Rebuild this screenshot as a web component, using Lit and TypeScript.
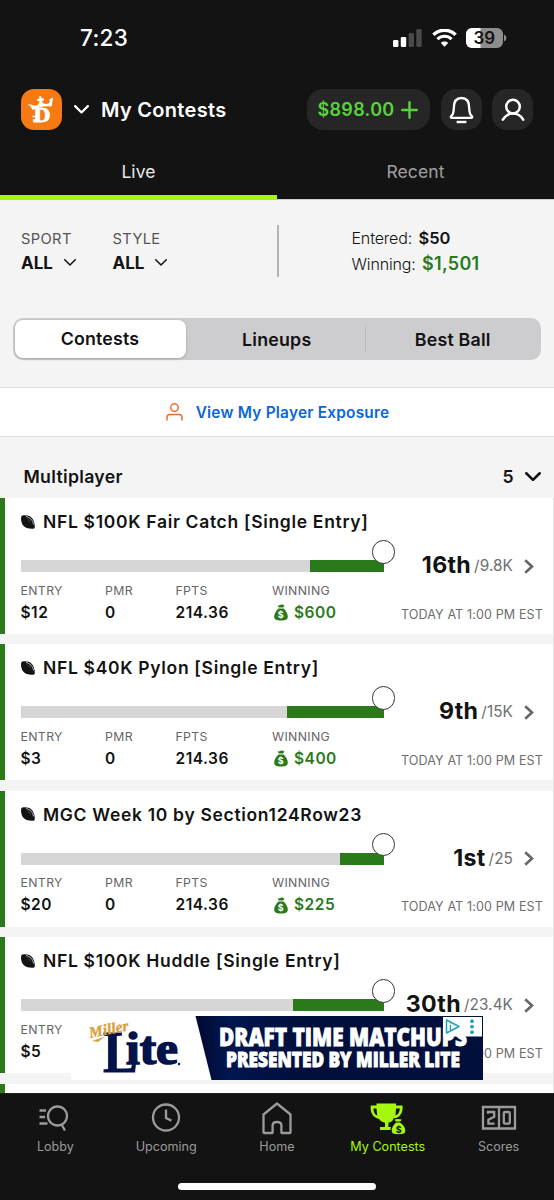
import { LitElement, html, css, svg } from "lit";
import { customElement, property } from "lit/decorators.js";

interface Contest {
  name: string;
  entry: string;
  pmr: string;
  fpts: string;
  winning: string;
  place: string;
  field: string;
  progress: number;
}

const CONTESTS: Contest[] = [
  { name: "NFL $100K Fair Catch [Single Entry]", entry: "$12", pmr: "0", fpts: "214.36", winning: "$600", place: "16th", field: "/9.8K", progress: 20.2 },
  { name: "NFL $40K Pylon [Single Entry]", entry: "$3", pmr: "0", fpts: "214.36", winning: "$400", place: "9th", field: "/15K", progress: 26.5 },
  { name: "MGC Week 10 by Section124Row23", entry: "$20", pmr: "0", fpts: "214.36", winning: "$225", place: "1st", field: "/25", progress: 12.1 },
  { name: "NFL $100K Huddle [Single Entry]", entry: "$5", pmr: "", fpts: "", winning: "", place: "30th", field: "/23.4K", progress: 24.8 },
];

const moneyBag = html`<svg width="14" height="17" viewBox="0 0 14 17">
  <path fill="#2a7a1b" d="M3.6 0.9 Q5.2 1.9 6.6 0.8 Q8.4 0 10.4 1.5 L9.2 3.6 H4.8 Z" />
  <path fill="#2a7a1b" d="M4.4 4.6 H9.6 C11.8 6.6 13.8 9.6 13.8 12.6 C13.8 15.4 12.2 16.6 7 16.6 C1.8 16.6 0.2 15.4 0.2 12.6 C0.2 9.6 2.2 6.6 4.4 4.6 Z" />
  <text x="7" y="13.8" text-anchor="middle" font-family="Inter, sans-serif" font-size="9" font-weight="700" fill="#fff">$</text>
</svg>`;

const football = html`<svg width="14" height="14" viewBox="0 0 14 14">
  <path fill="#131313" d="M0.4 1.2 C1 0 5 -0.2 8.4 1 C12 3 14.2 7.4 13.7 12.6 C13.6 13.5 12.8 13.8 11.6 13.8 C7.6 13.9 4 13.2 1.6 9.8 C0 7 -0.3 2.8 0.4 1.2 Z" />
  <path fill="none" stroke="#e4e4e4" stroke-width="0.8" d="M5 1.6 C9 2.2 12 5.4 12.5 9.4" />
  <path fill="none" stroke="#777" stroke-width="0.6" d="M6.4 3.8 L9.8 7.2" />
</svg>`;

const chevronDown = (w: number, stroke: string, sw: number) => html`<svg width=${w} height=${w * 0.6} viewBox="0 0 ${w} ${w * 0.6}">
  ${svg`<path fill="none" stroke=${stroke} stroke-width=${sw} stroke-linecap="round" stroke-linejoin="round"
    d="M${sw / 2} ${sw / 2} L${w / 2} ${w * 0.6 - sw / 2 - 0.4} L${w - sw / 2} ${sw / 2}" />`}
</svg>`;

@customElement("contest-card")
export class ContestCard extends LitElement {
  @property({ attribute: false }) contest!: Contest;

  static styles = css`
    :host { display: block; height: 136px; margin-bottom: 10.4px; flex: none; }
    .card { box-sizing: border-box; height: 136px; background: #fff; border-left: 5px solid #2a7a1b; padding: 0 10px 0 15.5px; }
    .title { display: flex; align-items: center; gap: 8px; height: 47px; padding: 0 0 4px 0.5px; font-size: 17.5px; font-weight: 600; letter-spacing: 0.68px; white-space: nowrap; }
    .title svg { flex: none; }
    .middle { display: flex; align-items: center; height: 34px; }
    .track { position: relative; width: 363px; height: 12px; flex: none; display: flex; justify-content: flex-end; background: #d6d6d6; }
    .fill { background: #2a7a1b; }
    .knob { position: absolute; right: -11.5px; top: -20px; box-sizing: border-box; width: 23.5px; height: 23.5px; border: 1.4px solid #333; border-radius: 50%; background: #fff; }
    .rank { flex: 1; display: flex; align-items: center; justify-content: flex-end; white-space: nowrap; padding-bottom: 2px; }
    .place { font-size: 23.2px; font-weight: 700; letter-spacing: 0.3px; }
    .field { font-size: 15.3px; font-weight: 400; color: #6e6e6e; margin-left: 3px; letter-spacing: 0.1px; padding-top: 1px; }
    .go { display: block; margin: 0 9px 0 11px; }
    .stats { display: grid; grid-template-columns: 84.6px 70.4px 96.5px 1fr auto; line-height: 14px; padding-top: 0.5px; }
    .label { font-size: 12.3px; font-weight: 400; color: #666; letter-spacing: 0.35px; }
    .value { display: flex; align-items: center; gap: 6px; height: 14px; margin-top: 8px; font-size: 15.5px; font-weight: 600; letter-spacing: 0.5px; }
    .money { color: #2a7a1b; padding-left: 2px; }
    .date { align-self: end; font-size: 12.6px; font-weight: 400; color: #6e6e6e; letter-spacing: 0.1px; padding-top: 23px; margin-bottom: -2px; white-space: nowrap; }
  `;

  render() {
    const c = this.contest;
    return html`<div class="card">
      <div class="title">${football}<span>${c.name}</span></div>
      <div class="middle">
        <div class="track"><div class="fill" style="width:${c.progress}%"></div><div class="knob"></div></div>
        <div class="rank"><span class="place">${c.place}</span><span class="field">${c.field}</span></div>
        <svg class="go" width="10" height="15" viewBox="0 0 10 15"><path fill="none" stroke="#666" stroke-width="2.6" d="M1.2 1.2 L8 7.5 L1.2 13.8" /></svg>
      </div>
      <div class="stats">
        <div><div class="label">ENTRY</div><div class="value">${c.entry}</div></div>
        <div>${c.pmr ? html`<div class="label">PMR</div><div class="value">${c.pmr}</div>` : ""}</div>
        <div>${c.fpts ? html`<div class="label">FPTS</div><div class="value">${c.fpts}</div>` : ""}</div>
        <div>${c.winning ? html`<div class="label">WINNING</div><div class="value money">${moneyBag}<span>${c.winning}</span></div>` : ""}</div>
        <div class="date">TODAY AT 1:00 PM EST</div>
      </div>
    </div>`;
  }
}

@customElement("ad-banner")
export class AdBanner extends LitElement {
  static styles = css`
    :host { display: block; }
    svg { display: block; }
  `;
  render() {
    return html`<svg width="412" height="64" viewBox="0 0 412 64">
      <defs><linearGradient id="navy"><stop offset="0" stop-color="#000a30" /><stop offset="0.12" stop-color="#011550" /><stop offset="0.35" stop-color="#000f3c" /><stop offset="1" stop-color="#000f3c" /></linearGradient></defs>
      <rect width="412" height="64" fill="#fff" />
      <path d="M124.5 0 H412 V64 H140.5 Z" fill="url(#navy)" />
      <g fill="#04134a" stroke="#04134a" font-family="Liberation Serif, serif" font-weight="700">
        <text x="32" y="56" font-size="60" stroke-width="0.8" textLength="35" lengthAdjust="spacingAndGlyphs">L</text>
        <text x="55" y="48" font-size="46" stroke-width="1.6" textLength="52" lengthAdjust="spacingAndGlyphs">ite</text>
      </g>
      <circle cx="108" cy="48" r="1.2" fill="#04134a" />
      <text x="19" y="22" transform="rotate(-11 19 22)" font-family="Liberation Serif, serif" font-style="italic" font-weight="700" font-size="15.5" fill="#d9a03c" stroke="#d9a03c" stroke-width="0.3" textLength="40" lengthAdjust="spacingAndGlyphs">Miller</text>
      <path d="M21 25 L34 20.5 L27 26 Z" fill="#d9a03c" />
      <g fill="#fff" stroke="#fff" stroke-width="0.9" font-family="Open Sans, sans-serif" font-weight="800">
        <text x="148" y="30" font-size="25.5" textLength="248" lengthAdjust="spacingAndGlyphs">DRAFT TIME MATCHUPS</text>
        <text x="155" y="51" font-size="20.5" textLength="234" lengthAdjust="spacingAndGlyphs">PRESENTED BY MILLER LITE</text>
      </g>
      <rect x="372" y="1" width="39" height="19.5" fill="#fff" />
      <path d="M375.5 4 V17 L388 10.5 Z" fill="none" stroke="#1aa5b8" stroke-width="1.5" stroke-linejoin="round" />
      <path d="M379.4 8.8 V14 M379.4 6.4 V7.6" stroke="#1aa5b8" stroke-width="1.3" />
      <g fill="#1aa5b8"><circle cx="401" cy="5.2" r="1.9" /><circle cx="401" cy="10.7" r="1.9" /><circle cx="401" cy="16.2" r="1.9" /></g>
    </svg>`;
  }
}

@customElement("app-root")
export class AppRoot extends LitElement {
  static styles = css`
    :host { display: block; width: 554px; height: 1200px; overflow: hidden; font-family: Inter, "Liberation Sans", sans-serif; color: #131313; }
    * { box-sizing: border-box; }
    svg { display: block; flex: none; }
    .screen { display: flex; flex-direction: column; height: 1200px; background: #f4f4f4; position: relative; }
    .head { height: 200px; flex: none; background: #131313; color: #fff; }
    .status { display: flex; align-items: center; height: 75px; padding: 0 47px 0 80px; }
    .time { flex: 1; font-size: 22.5px; font-weight: 500; letter-spacing: 0.3px; }
    .signal { margin-right: 10px; }
    .wifi { margin-right: 9px; }
    .topbar { display: flex; align-items: center; height: 69px; padding: 0 21px; }
    .heading { flex: 1; margin-left: 12px; font-size: 20px; font-weight: 600; letter-spacing: 0.3px; }
    .down { margin-left: 12px; }
    .pill { display: flex; align-items: center; height: 41px; border-radius: 16px; background: #262626; justify-content: center; }
    .balance { width: 123px; gap: 7px; color: #57d43b; font-size: 18px; font-weight: 600; letter-spacing: 0.3px; padding-right: 1px; }
    .round { width: 41px; margin-left: 10.5px; border-radius: 15px; }
    .tabs { display: flex; height: 56px; font-size: 17.5px; letter-spacing: 0.1px; }
    .tab { flex: 1; text-align: center; line-height: 56px; color: #a0a0a0; font-weight: 400; border-bottom: 1px solid #d0d0d0; }
    .on { color: #e8e8e8; border-bottom: 5.5px solid #a6f70f; }
    .filters { display: flex; height: 118px; flex: none; padding: 25px 0 0 21px; }
    .filter { width: 91.5px; font-size: 14.7px; font-weight: 400; color: #555; line-height: 28px; letter-spacing: 0.35px; }
    .pick { display: flex; align-items: center; gap: 11px; line-height: 20px; font-size: 17px; font-weight: 700; color: #131313; letter-spacing: 0; }
    .rule { width: 1.5px; height: 52px; background: #b4b4b4; margin-left: 73px; }
    .totals { margin-left: 73px; font-size: 16px; font-weight: 300; line-height: 26px; letter-spacing: -0.15px; }
    .totals b { font-weight: 600; font-size: 16.5px; margin-left: 2px; letter-spacing: 0; }
    .totals .won { color: #2a7a1b; font-size: 18px; letter-spacing: 0.3px; line-height: 24px; }
    .segments { display: flex; flex: none; margin: 0 13px; height: 42px; padding: 2px 1.5px; border-radius: 10px; background: #cdcdcf; font-size: 17.8px; font-weight: 600; letter-spacing: 0.2px; align-items: center; }
    .segment { flex: 1; text-align: center; }
    .middle { flex: none; width: 179.5px; padding-left: 3px; }
    .active { align-self: stretch; line-height: 38px; background: #fff; border-radius: 8px; flex: none; width: 171px; padding-left: 0; box-shadow: 0 1px 3px rgba(0,0,0,.2); }
    .sep { width: 1px; height: 26px; background: #bbb; }
    .exposure { display: flex; flex: none; align-items: center; justify-content: center; gap: 13px; margin-top: 27px; height: 50px; border: solid #e2e2e2; border-width: 1px 0; background: #fff; color: #0b66d6; font-size: 15.4px; font-weight: 600; letter-spacing: 0.23px; padding-left: 1px; }
    .section { display: flex; flex: none; align-items: center; height: 61px; padding: 18px 13px 0 23.5px; font-size: 17.7px; font-weight: 600; letter-spacing: 0.3px; }
    .section span { flex: 1; }
    .count { margin-right: 11px; }
    .list { flex: 1; overflow: hidden; border-right: 1px solid #e4e4e4; }
    .next { height: 20px; background: #fff; border-left: 5px solid #2a7a1b; }
    .ad { position: absolute; left: 71px; top: 1016px; }
    .nav { flex: none; height: 107px; background: #131313; color: #9b9b9b; border-top: 1px solid #222; }
    .items { display: flex; height: 89px; }
    .item { flex: 1; display: flex; flex-direction: column; align-items: center; font-size: 12.6px; letter-spacing: 0; padding-top: 5px; }
    .item svg { height: 36px; width: 40px; }
    .item span { line-height: 24px; }
    .current { color: #a6f70f; }
    .homebar { width: 198px; height: 7px; border-radius: 4px; background: #fff; margin: 0 auto; }
  `;

  render() {
    return html`<div class="screen">
      <div class="head">
        <div class="status">
          <div class="time">7:23</div>
          <svg class="signal" width="29" height="18" viewBox="0 0 29 18"><rect y="11" width="5.4" height="7" rx="1.3" fill="#fff" /><rect x="7.8" y="8" width="5.4" height="10" rx="1.3" fill="#fff" /><rect x="15.6" y="4" width="5.4" height="14" rx="1.3" fill="#4a4a4a" /><rect x="23.3" y="0" width="5.4" height="18" rx="1.3" fill="#4a4a4a" /></svg>
          <svg class="wifi" width="25" height="18" viewBox="0 0 25 18"><path d="M1.4 5.8 C7.4 -0.3 17.6 -0.3 23.6 5.8" fill="none" stroke="#fff" stroke-width="3.4" /><path d="M5.4 10.1 C9.3 6.2 15.7 6.2 19.6 10.1" fill="none" stroke="#fff" stroke-width="3.1" /><path d="M12.5 17.8 L8.8 13.9 C10.8 12 14.2 12 16.2 13.9 Z" fill="#fff" /></svg>
          <svg width="41" height="20" viewBox="0 0 41 20"><defs><clipPath id="cell"><rect width="37" height="20" rx="6" /></clipPath></defs><g clip-path="url(#cell)"><rect width="37" height="20" fill="#8d8d8d" /><rect width="14.5" height="20" fill="#fff" /></g><path d="M38 6.5 Q40.5 7.5 40.5 10 Q40.5 12.5 38 13.5 Z" fill="#8d8d8d" /><text x="18.3" y="16" text-anchor="middle" font-family="Inter, sans-serif" font-size="17" font-weight="600" fill="#131313">39</text></svg>
        </div>
        <div class="topbar">
          <svg width="41" height="41" viewBox="0 0 41 41"><rect width="41" height="41" rx="13" fill="#f57a14" />
            <path fill="#fff" d="M6.6 15.4 L10.2 15.4 Q14.6 17.8 17.2 15.4 Q18.5 14 18.5 12 L16.2 12.3 L15.9 10 L18.2 9.8 L18 7.5 L20.3 7.3 L20.6 9.6 L22.8 9.3 L23.1 11.5 L20.9 11.8 Q22 15.4 25.3 15.1 Q28.2 14.6 29 12.4 L28.2 10.6 L32.2 8.6 L30.6 17.6 Q21 16.2 11.6 21 L9.4 17.2 Z" />
            <text x="12.5" y="33.4" font-family="Liberation Serif, serif" font-weight="700" font-size="20" fill="#fff" stroke="#fff" stroke-width="0.8" textLength="17" lengthAdjust="spacingAndGlyphs">D</text>
            <path d="M11.4 27.5 H16 M11.8 31 H17" stroke="#fff" stroke-width="1.6" />
          </svg>
          <div class="down">${chevronDown(15, "#fff", 2.3)}</div>
          <div class="heading">My Contests</div>
          <div class="pill balance"><span>$898.00</span><svg width="17" height="18" viewBox="0 0 17 18"><path d="M8.5 1.2 V16.8 M1.2 9 H15.8" stroke="#57d43b" stroke-width="2.4" stroke-linecap="round" /></svg></div>
          <div class="pill round"><svg width="25" height="28" viewBox="0 0 25 28"><path d="M4.8 12 C4.8 5.6 7.6 2 12.5 2 C17.4 2 20.2 5.6 20.2 12 C20.2 16.6 21 18.6 22.9 20.2 C23.6 21 23.2 21.8 22.2 21.8 H2.8 C1.8 21.8 1.4 21 2.1 20.2 C4 18.6 4.8 16.6 4.8 12 Z" fill="none" stroke="#fff" stroke-width="2.3" /><path d="M7.6 26 H17.4" stroke="#fff" stroke-width="2.4" /></svg></div>
          <div class="pill round"><svg width="24" height="24" viewBox="0 0 24 24"><circle cx="12" cy="8.6" r="6.8" fill="none" stroke="#fff" stroke-width="2.5" /><path d="M1.8 21.6 C4.2 17.8 8.4 15.6 12 15.6 C15.6 15.6 19.8 17.8 22.2 21.6" fill="none" stroke="#fff" stroke-width="2.5" stroke-linecap="round" /></svg></div>
        </div>
        <div class="tabs"><div class="tab on">Live</div><div class="tab">Recent</div></div>
      </div>

      <div class="filters">
        <div class="filter">SPORT<div class="pick">ALL${chevronDown(12, "#131313", 1.5)}</div></div>
        <div class="filter">STYLE<div class="pick">ALL${chevronDown(12, "#131313", 1.5)}</div></div>
        <div class="rule"></div>
        <div class="totals"><div>Entered: <b>$50</b></div><div>Winning: <b class="won">$1,501</b></div></div>
      </div>

      <div class="segments">
        <div class="segment active">Contests</div>
        <div class="segment middle">Lineups</div>
        <div class="sep"></div>
        <div class="segment">Best Ball</div>
      </div>

      <div class="exposure">
        <svg width="17" height="18" viewBox="0 0 17 18"><circle cx="8.5" cy="4.6" r="3.8" fill="none" stroke="#ee6c35" stroke-width="1.5" /><path d="M1 17.4 V14.4 Q1 11.6 3.8 11.6 H13.2 Q16 11.6 16 14.4 V17.4" fill="none" stroke="#ee6c35" stroke-width="1.5" /></svg>
        <span>View My Player Exposure</span>
      </div>

      <div class="section"><span>Multiplayer</span><div class="count">5</div>${chevronDown(16, "#131313", 2.6)}</div>

      <div class="list">
        ${CONTESTS.map((c) => html`<contest-card .contest=${c}></contest-card>`)}
        <div class="next"></div>
      </div>

      <ad-banner class="ad"></ad-banner>

      <div class="nav">
        <div class="items">
          <div class="item"><svg viewBox="0 0 40 36"><g fill="none" stroke="currentColor" stroke-width="2.3"><circle cx="22.5" cy="17" r="9.5" /><path d="M26.5 25.5 L30 31.5 M4.5 11.5 H11 M4.5 18 H10 M4.5 24.5 H12.5" /></g></svg><span>Lobby</span></div>
          <div class="item"><svg viewBox="0 0 40 36"><g fill="none" stroke="currentColor" stroke-width="2.3"><circle cx="20" cy="18.5" r="13" /><path d="M20 10.5 V19 L25.4 21.6" /></g></svg><span>Upcoming</span></div>
          <div class="item"><svg viewBox="0 0 40 36"><path fill="none" stroke="currentColor" stroke-width="2.3" stroke-linejoin="round" d="M6.5 33.5 V15.5 L20 4.5 L33.5 15.5 V33.5 Q33.5 34 33 34 H25 Q24.4 34 24.4 33.4 V26.5 Q24.4 23 20 23 Q15.6 23 15.6 26.5 V33.4 Q15.6 34 15 34 H7 Z" /></svg><span>Home</span></div>
          <div class="item current"><svg viewBox="0 0 40 36"><path fill="currentColor" d="M8.5 4.5 H28 V6.5 H34.5 C35.5 13.5 32 18.5 26 20 C24.5 22 22.6 23.2 20.4 23.8 V28 H24 V31 H12 V28 H17 V23.8 C14.5 23.2 12.8 22.2 11 20 C5 18.5 1.8 13.5 2.8 6.5 H8.5 Z M5.5 9.5 C5.5 13.2 6.6 15.4 9.2 16.6 L8.5 9.5 Z M31.8 9.5 H28 L27.5 16.6 C30.2 15.4 31.7 13.2 31.8 9.5 Z" fill-rule="evenodd" />
            <path fill="currentColor" stroke="#131313" stroke-width="1.4" d="M27.3 23.2 L25.8 20.2 Q29.8 18.6 34.6 20.2 L32.8 23.2 C36.5 26 38 29.4 38 31.4 C38 35.2 35.5 36 30.5 36 C25.5 36 23 35.2 23 31.4 C23 29.4 24.4 26 27.3 23.2 Z" />
            <path d="M26.8 23 H33" stroke="#131313" stroke-width="1" /><text x="30.6" y="33.6" text-anchor="middle" font-family="Inter, sans-serif" font-size="9" font-weight="700" fill="#131313">$</text></svg><span>My Contests</span></div>
          <div class="item"><svg viewBox="0 0 40 36"><g fill="none" stroke="currentColor" stroke-width="2.3"><path d="M4 8 H36 V29.5 H4 Z M20 8 V29.5" /><path d="M9 14.7 V13 H15.2 V17.8 L9.4 20.6 V24.6 H15.6" /><path d="M24.8 14.2 Q24.8 13 26 13 H29.6 Q30.8 13 30.8 14.2 V23.4 Q30.8 24.6 29.6 24.6 H26 Q24.8 24.6 24.8 23.4 Z" /></g></svg><span>Scores</span></div>
        </div>
        <div class="homebar"></div>
      </div>
    </div>`;
  }
}
